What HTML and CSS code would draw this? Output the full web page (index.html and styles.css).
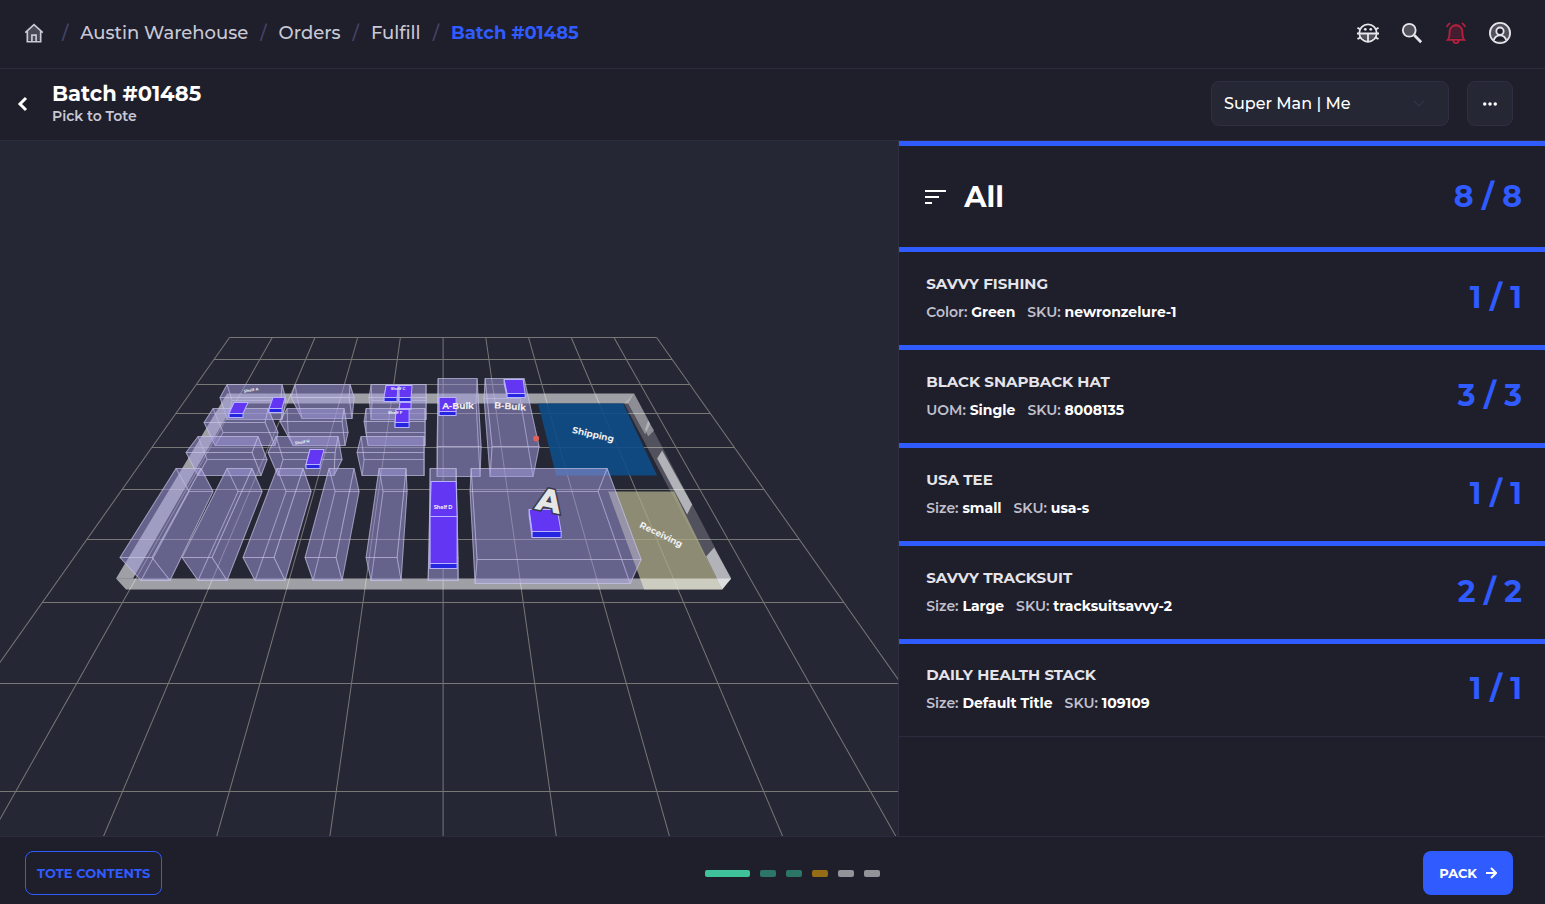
FILE: index.html
```html
<!DOCTYPE html>
<html lang="en">
  <head>
    <meta charset="UTF-8" />
    <meta name="viewport" content="width=device-width, initial-scale=1" />
    <title>Batch #01485</title>
    <link rel="stylesheet" href="styles.css">
  </head>
  <body>
    <header class="topbar">
      <nav class="breadcrumb" aria-label="Breadcrumb">
        <a href="#" class="home" aria-label="Home">
          <svg class="icon" viewBox="0 0 24 24">
            <path class="tint" d="M4 10 12 3l8 7v11H4z" />
            <path d="M1.500 11.500 12 2l10.500 9.500M4 9.500V22.500h16V9.500M9.500 22v-7.500h5V22" />
          </svg>
        </a>
        <span class="slash">/</span>
        <a href="#">Austin Warehouse</a>
        <span class="slash">/</span>
        <a href="#">Orders</a>
        <span class="slash">/</span>
        <a href="#">Fulfill</a>
        <span class="slash">/</span>
        <a href="#" class="current" aria-current="page">Batch #01485</a>
      </nav>
      <div class="tools">
        <button type="button" aria-label="Report a bug">
          <svg class="icon" viewBox="0 0 24 24">
            <circle cx="12" cy="12" r="9.500" />
            <path class="tint" d="M4 12h16a8 8 0 0 1-16 0z" />
            <path d="M0 12.500h24M12 12.500v9M.5 6.500l3.500 1.500M23.500 6.500 20 8M.5 18.500 4 17M23.500 18.500 20 17" />
            <circle class="dot" cx="9" cy="8" r="1.500" />
            <circle class="dot" cx="15" cy="8" r="1.500" />
          </svg>
        </button>
        <button type="button" aria-label="Search">
          <svg class="icon" viewBox="0 0 24 24">
            <circle class="tint" cx="9" cy="9" r="7" />
            <circle cx="9" cy="9" r="7" />
            <path class="thick" d="m14.500 14.500 7.500 7.500" />
          </svg>
        </button>
        <button type="button" class="alert" aria-label="Notifications">
          <svg class="icon" viewBox="0 0 24 24">
            <path class="tint" d="M5 18V9a7 7 0 0 1 14 0v9z" />
            <path d="M3 19.500c2-2 2-4 2-9a7 7 0 0 1 14 0c0 5 0 7 2 9zM9 20c.5 4 5.500 4 6 0M2 5.500Q3 2.500 5.500 1M22 5.500Q21 2.500 18.500 1" />
          </svg>
        </button>
        <button type="button" aria-label="Account">
          <svg class="icon" viewBox="0 0 24 24">
            <circle class="tint" cx="12" cy="12" r="10" />
            <circle cx="12" cy="12" r="11" />
            <circle class="cutout" cx="12" cy="10" r="4" />
            <path class="cutout" d="M5 20.500c2-8 12-8 14 0" />
          </svg>
        </button>
      </div>
    </header>

    <section class="subbar">
      <a href="#" class="back" aria-label="Back">
        <svg viewBox="0 0 12 18"><path d="M9 3 3 9l6 6" /></svg>
      </a>
      <div class="title">
        <h1>Batch #01485</h1>
        <p>Pick to Tote</p>
      </div>
      <div class="assignee">
        <select aria-label="Assignee">
          <option>Super Man | Me</option>
        </select>
        <svg viewBox="0 0 12 8"><path d="m1 1 5 5 5-5" /></svg>
      </div>
      <button type="button" class="more" aria-label="More actions">
        <svg viewBox="0 0 16 4">
          <circle cx="2" cy="2" r="2" />
          <circle cx="8" cy="2" r="2" />
          <circle cx="14" cy="2" r="2" />
        </svg>
      </button>
    </section>

    <main class="content">
      <div class="map">
        <svg viewBox="0 140 898 696" preserveAspectRatio="xMidYMid slice" role="img" aria-label="Warehouse map">
          <g id="floor" class="floor"></g>

          <polygon class="wall" points="227,393 634,393 628,403 234,403" />
          <polygon class="wall" points="227,393 234,403 145,557 133,578 116,578" />
          <polygon class="wall-dim" points="634,393 731,578 722,589 624,403" />
          <polygon class="wall-gap" points="634,393 650,423 645,434 628,403" />
          <polygon class="wall-gap" points="648,420 654,430 648,436 645,429" />
          <polygon class="wall" points="662,450 692,504 687,514 657,458" />
          <polygon class="wall" points="714,547 731,578 722,589 706,556" />
          <polygon class="shipping" points="538,403 623,403 657,475 556,475" />
          <polygon class="receiving" points="608,491 674,491 722,589 644,589" />
          <polygon class="wall" points="116,578 731,578 722,589 126,589" />

          <g id="racks" class="racks"></g>
          <g id="totes" class="totes"></g>
          <circle class="marker" cx="536" cy="438" r="3" />

          <g class="labels">
            <text x="458" y="409">A-Bulk</text>
            <text x="510" y="409" transform="rotate(4 510 406)">B-Bulk</text>
            <text x="593" y="437" transform="rotate(13 593 434)">Shipping</text>
            <text x="661" y="537" transform="rotate(26 661 534)">Receiving</text>
            <text class="tiny" x="251" y="391" transform="rotate(-10 251 389)">Shelf A</text>
            <text class="tiny" x="398" y="390">Shelf C</text>
            <text class="tiny" x="395" y="414">Shelf F</text>
            <text class="tiny" x="302" y="443" transform="rotate(-8 302 441)">Shelf H</text>
            <text class="small" x="443" y="509">Shelf D</text>
            <text class="zone" x="549" y="511" transform="rotate(12 549 500)">A</text>
          </g>
        </svg>
      </div>

      <aside class="picks">
        <div class="summary">
          <svg viewBox="0 0 22 16"><path d="M0 2h21M0 8h14M0 14h7" /></svg>
          <h2>All</h2>
          <span class="count">8 / 8</span>
        </div>
        <ul class="items">
          <li>
            <div>
              <h3>SAVVY FISHING</h3>
              <p><span>Color: <b>Green</b></span><span>SKU: <b>newronzelure-1</b></span></p>
            </div>
            <span class="count">1 / 1</span>
          </li>
          <li>
            <div>
              <h3>BLACK SNAPBACK HAT</h3>
              <p><span>UOM: <b>Single</b></span><span>SKU: <b>8008135</b></span></p>
            </div>
            <span class="count">3 / 3</span>
          </li>
          <li>
            <div>
              <h3>USA TEE</h3>
              <p><span>Size: <b>small</b></span><span>SKU: <b>usa-s</b></span></p>
            </div>
            <span class="count">1 / 1</span>
          </li>
          <li>
            <div>
              <h3>SAVVY TRACKSUIT</h3>
              <p><span>Size: <b>Large</b></span><span>SKU: <b>tracksuitsavvy-2</b></span></p>
            </div>
            <span class="count">2 / 2</span>
          </li>
          <li>
            <div>
              <h3>DAILY HEALTH STACK</h3>
              <p><span>Size: <b>Default Title</b></span><span>SKU: <b>109109</b></span></p>
            </div>
            <span class="count">1 / 1</span>
          </li>
        </ul>
      </aside>
    </main>

    <footer class="actions">
      <button type="button" class="btn outline">TOTE CONTENTS</button>
      <div class="steps">
        <span class="step active"></span>
        <span class="step done"></span>
        <span class="step done"></span>
        <span class="step partial"></span>
        <span class="step"></span>
        <span class="step"></span>
      </div>
      <button type="button" class="btn primary">
        PACK
        <svg viewBox="0 0 12 12"><path d="M1 6h10M6 1l5 5-5 5" /></svg>
      </button>
    </footer>
    <script src="map.js"></script>
  </body>
</html>
```

FILE: styles.css
```css
* {
  box-sizing: border-box;
}

body {
  display: flex;
  flex-direction: column;
  min-height: 100vh;
  margin: 0;
  background: #1f1e2b;
  color: #fff;
  font-family: "Montserrat", "Inter", sans-serif;
}

h1,
h2,
h3,
p,
ul {
  margin: 0;
  padding: 0;
}

button,
select {
  font-family: inherit;
  cursor: pointer;
}

a {
  color: inherit;
  text-decoration: none;
}

svg {
  display: block;
  fill: none;
  stroke: currentColor;
}

/* top bar */
.topbar {
  display: flex;
  align-items: center;
  justify-content: space-between;
  height: 69px;
  padding: 0 34px 3px 24px;
  border-bottom: 1px solid #2c2c3e;
}

.breadcrumb {
  display: flex;
  align-items: center;
  gap: 12px;
  color: #c9c9d6;
  font-size: 18px;
  font-weight: 500;
}

.breadcrumb .home {
  margin-right: 6px;
}

.breadcrumb .home .icon {
  width: 20px;
  height: 20px;
}

.slash {
  color: #45456a;
}

.current {
  color: #2f5bff;
  font-weight: 700;
}

.icon {
  width: 22px;
  height: 22px;
  stroke-width: 2;
  overflow: visible;
}

.icon .tint {
  fill: currentColor;
  stroke: none;
  opacity: 0.25;
}

.icon .dot {
  fill: currentColor;
  stroke: none;
}

.icon .thick {
  stroke-width: 3;
}

.icon .cutout {
  fill: #1f1e2b;
}

.tools {
  display: flex;
  gap: 22px;
}

.tools button {
  padding: 0;
  border: none;
  background: none;
  color: #e6e6ea;
}

.tools .alert {
  color: #b3213f;
}

/* batch title bar */
.subbar {
  display: flex;
  align-items: center;
  height: 72px;
  padding: 0 32px 2px 17px;
  border-bottom: 1px solid #2c2c3e;
}

.back svg {
  width: 12px;
  height: 18px;
  stroke-width: 3;
}

.title {
  flex: 1;
  padding-left: 23px;
}

.title h1 {
  font-size: 21px;
  font-weight: 700;
  line-height: 24px;
}

.title p {
  color: #c9c9d6;
  font-size: 14px;
  font-weight: 600;
  line-height: 20px;
}

.assignee {
  position: relative;
  margin-right: 18px;
}

.assignee select {
  appearance: none;
  width: 238px;
  height: 45px;
  padding: 0 12px;
  border: 1px solid #2f2f42;
  border-radius: 8px;
  background: #262735;
  color: #fff;
  font-size: 16px;
  font-weight: 500;
}

.assignee svg {
  position: absolute;
  top: 19px;
  right: 24px;
  width: 12px;
  height: 8px;
  color: #3a3a50;
  pointer-events: none;
}

.more {
  display: flex;
  align-items: center;
  justify-content: center;
  width: 46px;
  height: 45px;
  border: 1px solid #2f2f42;
  border-radius: 8px;
  background: #262735;
  color: #fff;
}

.more svg {
  width: 14px;
  height: 4px;
  fill: currentColor;
  stroke: none;
}

/* warehouse map */
.content {
  display: grid;
  grid-template-columns: 582fr 418fr;
  flex: 1;
  min-height: 0;
}

.map {
  position: relative;
  overflow: hidden;
  border-right: 1px solid #2f2f42;
  background: #262735;
}

/* fills whatever height the grid row gets */
.map > svg {
  position: absolute;
  width: 100%;
  height: 100%;
}

.floor {
  stroke: #777775;
}

.wall,
.wall-dim,
.wall-gap,
.shipping,
.receiving {
  stroke: none;
}

.wall {
  fill: #fff;
  fill-opacity: 0.56;
}

.wall-dim {
  fill: #fff;
  fill-opacity: 0.2;
}

.wall-gap {
  fill: #fff;
  fill-opacity: 0.35;
}

.shipping {
  fill: #0e4c88;
  fill-opacity: 0.9;
}

.receiving {
  fill: #b0ad88;
  fill-opacity: 0.75;
}

.racks {
  fill: #a39ddf;
  fill-opacity: 0.3;
  stroke: #cfcdec;
  stroke-opacity: 0.4;
  stroke-linejoin: round;
}

.totes {
  stroke: #b9b2ff;
  stroke-linejoin: round;
}

.totes .lid {
  fill: #6236f2;
}

.totes .front {
  fill: #2626e0;
}

.marker {
  fill: #e0605c;
  stroke: none;
}

.labels {
  fill: #f0f0f0;
  stroke: none;
  font-size: 9px;
  font-weight: 700;
  text-anchor: middle;
}

.labels .small {
  font-size: 5px;
}

.labels .tiny {
  font-size: 4px;
}

.labels .zone {
  fill: #e6e6e6;
  stroke: #3a3a48;
  stroke-width: 3;
  paint-order: stroke;
  font-size: 32px;
  font-weight: 800;
}

/* pick list */
.picks {
  border-top: 5px solid #2f5bff;
}

.summary {
  display: flex;
  align-items: center;
  height: 106px;
  padding: 0 23px 0 26px;
  border-bottom: 5px solid #2f5bff;
}

.summary svg {
  width: 22px;
  height: 16px;
  stroke-width: 2;
}

.summary h2 {
  flex: 1;
  padding-left: 17px;
  font-size: 29px;
  font-weight: 700;
}

.count {
  color: #2f5bff;
  font-size: 30px;
  font-weight: 700;
  white-space: nowrap;
}

.items {
  list-style: none;
}

.items li {
  display: flex;
  align-items: center;
  justify-content: space-between;
  padding: 22px 23px 23px 27px;
  border-bottom: 5px solid #2f5bff;
}

.items li:last-child {
  padding-top: 21px;
  border-bottom: 1px solid #2c2c3e;
}

.items h3 {
  margin-bottom: 8px;
  color: #e4e4ea;
  font-size: 15px;
  font-weight: 700;
  line-height: 20px;
}

.items p {
  display: flex;
  gap: 12px;
  color: #c0c0ce;
  font-size: 14px;
  font-weight: 600;
  line-height: 20px;
}

.items b {
  color: #fff;
  font-weight: 700;
}

.items .count {
  line-height: 48px;
}

/* footer */
.actions {
  display: flex;
  align-items: center;
  justify-content: space-between;
  padding: 14px 32px 9px 25px;
  border-top: 1px solid #2c2c3e;
}

.btn {
  display: flex;
  align-items: center;
  gap: 8px;
  height: 44px;
  padding: 0 16px;
  border: none;
  border-radius: 8px;
  font-size: 13px;
  font-weight: 700;
}

.btn svg {
  width: 12px;
  height: 12px;
  stroke-width: 2;
}

.btn.outline {
  padding: 0 11px;
  border: 1px solid #2f5bff;
  background: none;
  color: #2f5bff;
}

.btn.primary {
  background: #2f5bff;
  color: #fff;
}

.steps {
  display: flex;
  gap: 10px;
}

.step {
  width: 16px;
  height: 7px;
  border-radius: 2px;
  background: #929299;
}

.step.active {
  width: 45px;
  background: #3dc29a;
}

.step.done {
  background: #2d7567;
}

.step.partial {
  background: #956d16;
}
```

FILE: map.js
```js
const SVG_NS = "http://www.w3.org/2000/svg";

function add(parent, d, className) {
  const path = document.createElementNS(SVG_NS, "path");
  path.setAttribute("d", d);
  if (className) path.setAttribute("class", className);
  document.getElementById(parent).appendChild(path);
}

const poly = (...points) => "M" + points.map((p) => p.join(",")).join("L") + "Z";

// floor grid: lines fan out from the back edge
const centerX = 443;
const backY = 337;
const xAt = (k, y) => centerX + k * (42.7 + (y - backY) * 0.1413);

for (let k = -5; k <= 5; k++) {
  add("floor", `M${xAt(k, backY)},${backY}L${xAt(k, 900)},900`);
}
for (const y of [337, 359, 384, 413, 447, 489, 539, 602, 683, 791]) {
  add("floor", `M${xAt(-5, y)},${y}H${xAt(5, y)}`);
}

// each rack: left/right x of top back, top front, bottom back, bottom front, then the four y values
const racks = [
  [227, 282, 220, 281, 232, 286, 227, 282, 384, 397, 400, 419],
  [295, 350, 291, 349, 297, 354, 302, 352, 384, 397, 397, 418],
  [371, 426, 369, 426, 372, 426, 371, 426, 384, 397, 400, 419],
  [213, 268, 204, 265, 223, 278, 215, 275, 408, 422, 432, 445],
  [287, 344, 280, 342, 288, 348, 293, 345, 408, 421, 432, 445],
  [366, 425, 364, 425, 366, 425, 368, 425, 408, 421, 432, 445],
  [198, 258, 186, 252, 207, 267, 198, 261, 436, 452, 459, 475],
  [276, 338, 268, 335, 283, 342, 278, 334, 436, 452, 459, 475],
  [361, 424, 357, 424, 364, 424, 362, 424, 436, 452, 459, 475],
  [438, 477, 437, 481, 438, 476, 437, 480, 378, 446, 403, 476],
  [485, 524, 492, 539, 484, 520, 490, 533, 378, 446, 398, 476],
  [176, 201, 120, 152, 189, 213, 141, 170, 468, 557, 491, 580],
  [227, 252, 182, 212, 238, 262, 198, 227, 468, 557, 491, 580],
  [277, 303, 243, 274, 286, 311, 255, 285, 468, 557, 491, 580],
  [329, 354, 305, 336, 335, 359, 313, 342, 468, 557, 491, 580],
  [379, 406, 366, 397, 383, 407, 371, 401, 468, 557, 491, 580],
  [430, 456, 429, 458, 430, 456, 428, 458, 468, 557, 491, 580],
  [471, 607, 477, 641, 470, 598, 475, 630, 468, 559, 491, 583],
];

for (const [a, b, c, d, e, f, g, h, y1, y2, y3, y4] of racks) {
  const [A, B, C, D] = [[a, y1], [b, y1], [c, y2], [d, y2]];
  const [E, F, G, H] = [[e, y3], [f, y3], [g, y4], [h, y4]];
  add("racks", poly(E, F, H, G));
  add("racks", poly(A, B, F, E));
  add("racks", poly(A, C, G, E));
  add("racks", poly(B, D, H, F));
  add("racks", poly(C, D, H, G));
  add("racks", poly(A, B, D, C));
}

// each tote: back left/right x, front left/right x, back y, front y, height
const totes = [
  [234, 248, 229, 243, 402, 413, 4],
  [273, 285, 269, 282, 397, 408, 4],
  [310, 324, 306, 320, 449, 464, 4],
  [386, 398, 384, 397, 385, 397, 4],
  [399, 412, 399, 411, 385, 397, 4],
  [400, 411, 399, 411, 402, 408, 1],
  [396, 409, 395, 409, 409, 422, 5],
  [439, 456, 439, 456, 397, 411, 4],
  [504, 523, 507, 525, 379, 393, 4],
  [431, 456, 430, 457, 481, 516, 1],
  [430, 457, 430, 457, 516, 563, 5],
  [529, 557, 532, 561, 509, 531, 6],
];

for (const [a, b, c, d, y1, y2, h] of totes) {
  add("totes", poly([a, y1], [c, y2], [c, y2 + h], [a, y1 + h]), "front");
  add("totes", poly([c, y2], [d, y2], [d, y2 + h], [c, y2 + h]), "front");
  add("totes", poly([a, y1], [b, y1], [d, y2], [c, y2]), "lid");
}
```
